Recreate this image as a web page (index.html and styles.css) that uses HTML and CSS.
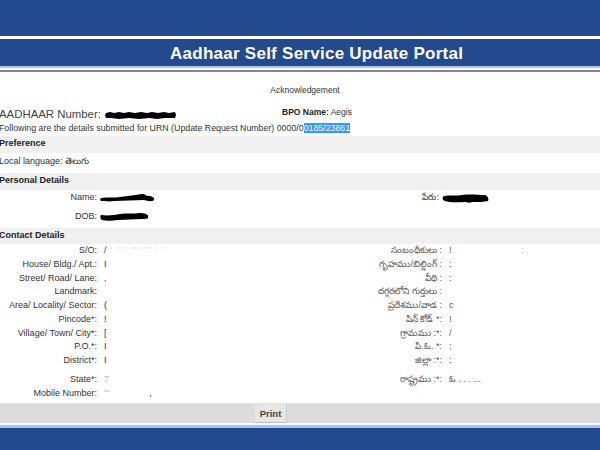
FILE: index.html
```html
<!DOCTYPE html>
<html lang="en">
<head>
<meta charset="utf-8">
<title>Aadhaar Self Service Update Portal</title>
<link rel="stylesheet" href="styles.css">
</head>
<body>
<div class="page">
  <header>
    <div class="top-band"></div>
    <div class="title-band"><h1>Aadhaar Self Service Update Portal</h1></div>
  </header>
  <main class="content">
    <p class="ack">Acknowledgement</p>
    <div class="id-row">
      <div class="aadhaar">AADHAAR Number: <svg class="blob blob-num" viewBox="0 0 71 8"><path d="M1 2 L5 1 L9 2 L14 1 L19 2 L24 1 L30 2 L36 1 L42 2 L47 1 L53 2 L59 1 L64 2 L70 1 L71 4 L70 7 L60 7 L52 8 L44 7 L34 8 L24 7 L14 8 L6 7 L1 7 L0 4Z"/></svg></div>
      <div class="bpo"><b>BPO Name:</b> Aegis</div>
    </div>
    <p class="urn">Following are the details submitted for URN (Update Request Number) 0000/0<span class="sel">0185/23861</span></p>
    <h2 class="band">Preference</h2>
    <p class="lang">Local language: తెలుగు</p>
    <h2 class="band">Personal Details</h2>
    <div class="personal">
      <div class="label">Name:</div><div class="val"><svg class="blob blob-name" viewBox="0 0 55 9"><path d="M1 5 C8 4 14 5 20 4 C28 3 36 2 42 1 C45 1 46 3 49 3 C52 3 55 5 54 7 C52 9 48 8 44 7 C34 7 24 8 14 8 C9 9 4 8 1 8 C0 7 0 6 1 5Z"/></svg></div>
      <div class="label">పేరు:</div><div class="val"><svg class="blob blob-tname" viewBox="0 0 47 10"><path d="M2 3 C8 2 14 3 20 2 C28 1 36 2 43 2 C46 3 47 6 46 8 C42 9 36 9 30 9 C28 10 26 10 24 9 C16 9 8 10 3 8 C0 7 0 4 2 3Z"/></svg></div>
      <div class="label">DOB:</div><div class="val"><svg class="blob blob-dob" viewBox="0 0 49 9"><path d="M1 3 C8 4 14 3 20 2 C26 1 34 2 40 1 C44 1 48 2 48 4 C49 7 46 7 42 7 C34 7 26 8 18 8 C12 9 6 9 2 8 C0 7 0 4 1 3Z"/></svg></div>
      <div></div><div></div>
    </div>
    <h2 class="band band-short">Contact Details</h2>
    <div class="contact">
      <div class="label">S/O:</div><div class="val">/<span class="faint"> ' '  ' ''' '' ' '</span></div><div class="label tel">సంబంధీకులు :</div><div class="val tel">!<span class="mark">:</span></div>
      <div class="label">House/ Bldg./ Apt.:</div><div class="val">I</div><div class="label tel">గృహము/బిల్డింగ్ :</div><div class="val tel">:</div>
      <div class="label">Street/ Road/ Lane:</div><div class="val">,</div><div class="label tel">వీధి :</div><div class="val tel">:</div>
      <div class="label">Landmark:</div><div class="val"></div><div class="label tel">దగ్గరలోని గుర్తులు :</div><div class="val tel"></div>
      <div class="label">Area/ Locality/ Sector:</div><div class="val">(</div><div class="label tel">ప్రదేశము/వాడ :</div><div class="val tel">c</div>
      <div class="label">Pincode*:</div><div class="val">!</div><div class="label tel">పిన్ కోడ్ *:</div><div class="val tel">!</div>
      <div class="label">Village/ Town/ City*:</div><div class="val">[</div><div class="label tel">గ్రామము :*:</div><div class="val tel">/</div>
      <div class="label">P.O.*:</div><div class="val">I</div><div class="label tel">పి.ఓ. *:</div><div class="val tel">:</div>
      <div class="label">District*:</div><div class="val">I</div><div class="label tel">జిల్లా :*:</div><div class="val tel">:</div>
      <div class="label">State*:</div><div class="val"><span class="pale">7</span></div><div class="label tel">రాష్ట్రము :*:</div><div class="val tel">ఓ . . . ...</div>
      <div class="label">Mobile Number:</div><div class="val"><span class="pale">'''</span><span class="mobile-mark">,</span></div><div></div><div></div>
    </div>
  </main>
  <footer>
    <div class="actions"><button class="print" type="button">Print</button></div>
    <div class="foot-band"></div>
  </footer>
</div>
</body>
</html>
```
FILE: styles.css
```css
* { box-sizing: border-box; }
html, body { margin: 0; padding: 0; background: #fff; }
body { font-family: "Liberation Sans", "Noto Sans", "DejaVu Sans", sans-serif; font-size: 9px; color: #333; }
.page { width: 600px; height: 450px; overflow: hidden; display: flex; flex-direction: column; }
.top-band { height: 36px; background: #234a8f; }
.title-band { margin-top: 3px; height: 33px; padding-bottom: 4px; background: #234a8f linear-gradient(#234a8f 27px, #a9c3e8 27px, #a9c3e8 29px, #fff 29px, #fff 31px, #888 31px); display: flex; }
h1 { margin: 0 0 0 170px; color: #fff; font-size: 17px; line-height: 29px; font-weight: bold; letter-spacing: 0.26px; white-space: nowrap; }
.content { flex: 1; }
p { margin: 0; }
.ack { margin-top: 12px; height: 12px; line-height: 12px; text-align: center; font-size: 8.5px; padding-left: 10px; }
.id-row { margin-top: 10px; height: 17px; display: flex; }
.aadhaar { width: 282px; font-size: 11.4px; line-height: 17px; color: #444; white-space: nowrap; text-indent: -1px; }
.bpo { font-size: 8.5px; line-height: 13px; }
.bpo b { color: #222; }
.urn { height: 13px; line-height: 11px; font-size: 8.8px; color: #333; white-space: nowrap; text-indent: -1px; }
.sel { background: #3399ff; color: #fff; }
.band { margin: 0; height: 17px; line-height: 14px; font-size: 9px; font-weight: bold; background: #f0f0f0; color: #222; text-indent: -1px; }
.band-short { height: 16px; }
.lang { height: 20px; line-height: 17px; text-indent: -1px; }
.blob { display: inline-block; vertical-align: middle; fill: #000; }
.blob-num { width: 71px; height: 8px; margin-left: 1px; }
.blob-name { width: 55px; height: 9px; }
.blob-tname { width: 47px; height: 10px; }
.blob-dob { width: 49px; height: 9px; }
.personal { display: grid; grid-template-columns: 97px 296px 46px 1fr; grid-auto-rows: 19px; height: 38px; line-height: 14px; }
.personal .val { padding-left: 3px; }
.personal .label, .contact .label { text-align: right; white-space: nowrap; }
.contact { display: grid; grid-template-columns: 97px 240px 105px 1fr; grid-template-rows: repeat(9, 13.75px) 19px 14px; line-height: 13.75px; align-items: end; }
.contact .val { padding-left: 7px; white-space: nowrap; }
.tel { color: #555; }
.faint { color: #ccc; letter-spacing: 1.4px; }
.pale { color: #c9b8a8; }
.mark { margin-left: 70px; color: #8fb8d8; }
.mobile-mark { margin-left: 40px; }
footer { flex: none; }
.actions { height: 20px; background: #dcdcdc; display: flex; justify-content: center; padding-right: 58px; border-top: 1px solid #e6e6e6; }
.print { width: 32px; height: 19px; padding: 0; font: bold 9.5px "Liberation Sans", sans-serif; color: #444; background: #e6e6e6; border: 0; border-right: 1px solid #ccc; border-bottom: 1px solid #bbb; }
.foot-band { margin-top: 2px; height: 25px; background: #234a8f linear-gradient(#a9c3e8 3px, #234a8f 3px); }
```
